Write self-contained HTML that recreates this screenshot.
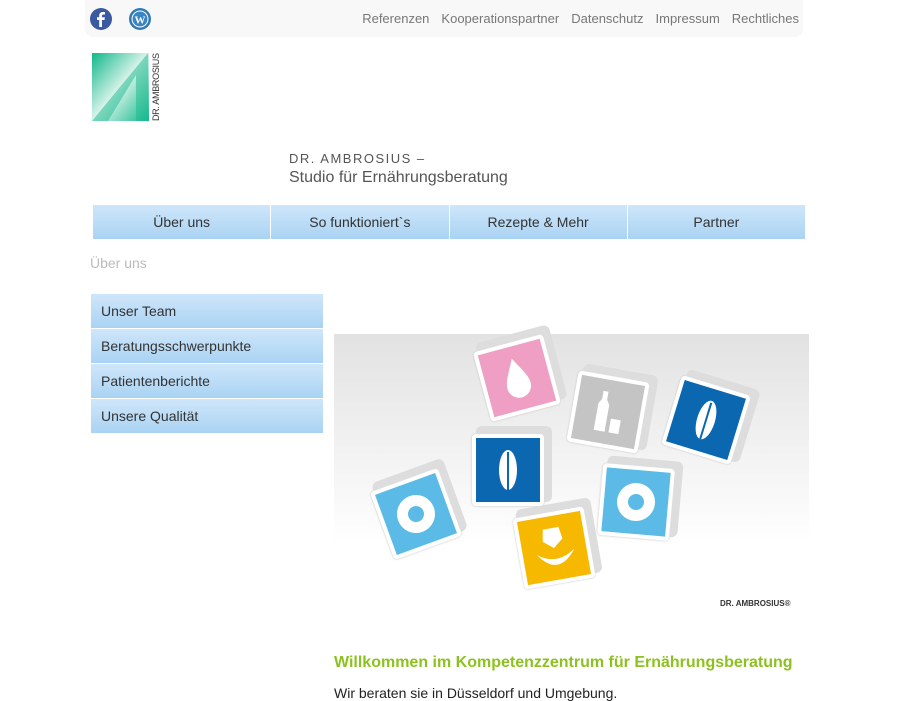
<!DOCTYPE html>
<html><head><meta charset="utf-8"><style>
body{margin:0;background:#fff;font-family:"Liberation Sans",sans-serif;width:900px;height:700px;overflow:hidden;position:relative}
.a{position:absolute}
.top{left:85px;top:0;width:718px;height:37px;background:#f8f8f8;border-radius:0 0 8px 8px}
.tl{right:101px;top:11px;font-size:13px;color:#777}
.tl span{margin-left:12px}
.menu{left:93px;top:205px;width:712px;height:34px;display:flex}
.menu div{flex:1;text-align:center;line-height:34px;font-size:14px;color:#333;background:linear-gradient(#cfe6fa,#a9d3f3);border-right:1px solid #fff}
.menu div:last-child{border-right:0}
.side{left:91px;top:294px;width:232px}
.side div{height:34px;line-height:34px;padding-left:10px;font-size:14px;color:#333;background:linear-gradient(#cfe6fa,#a9d3f3);margin-bottom:1px}
.c{position:absolute;width:64px;height:64px;border:4px solid #fff;border-radius:4px;box-shadow:6px -6px 0 2px #ddd,0 0 2px #bbb}
.c svg{position:absolute;left:0;top:0}
</style></head><body>
<div class="a top"></div>
<svg class="a" style="left:90px;top:8px" width="22" height="22"><circle cx="11" cy="11" r="11" fill="#3b5aa0"/><path d="M12 19v-7h2.5l.4-2.7H12V7.8c0-.8.3-1.3 1.4-1.3H15V4.1c-.3 0-1.2-.1-2.2-.1-2.2 0-3.6 1.3-3.6 3.7v1.6H7V12h2.2v7z" fill="#fff"/></svg>
<svg class="a" style="left:129px;top:8px" width="22" height="22"><circle cx="11" cy="11" r="11" fill="#2f79b5"/><circle cx="11" cy="11" r="8.5" fill="#fff"/><circle cx="11" cy="11" r="7.5" fill="#3a86c2"/><text x="11" y="15.5" font-size="11" font-weight="bold" text-anchor="middle" fill="#fff" font-family="Liberation Serif">W</text></svg>
<div class="a tl"><span>Referenzen</span><span>Kooperationspartner</span><span>Datenschutz</span><span>Impressum</span><span>Rechtliches</span></div>
<svg class="a" style="left:91px;top:53px" width="70" height="68"><defs><linearGradient id="g" x1="0" y1="0" x2="1" y2="1"><stop offset="0" stop-color="#10b88a"/><stop offset=".5" stop-color="#d8f3ea"/><stop offset="1" stop-color="#10b88a"/></linearGradient></defs><rect x="1" y="0" width="57" height="68" fill="url(#g)"/><path d="M1 68 L57 0 L57 68 L45 68 L45 22 L17 68Z" fill="#1bb98e" opacity=".5"/><text transform="translate(68,68) rotate(-90)" font-size="9" fill="#333" font-family="Liberation Sans" textLength="68">DR. AMBROSIUS</text></svg>
<div class="a" style="left:289px;top:151px;color:#555;font-size:13px;letter-spacing:1.5px">DR. AMBROSIUS –</div>
<div class="a" style="left:289px;top:169px;color:#555;font-size:16px">Studio für Ernährungsberatung</div>
<div class="a menu"><div>Über uns</div><div>So funktioniert`s</div><div>Rezepte &amp; Mehr</div><div>Partner</div></div>
<div class="a" style="left:90px;top:255px;color:#bbb;font-size:14px">Über uns</div>
<div class="a side"><div>Unser Team</div><div>Beratungsschwerpunkte</div><div>Patientenberichte</div><div>Unsere Qualität</div></div>
<div class="a" style="left:334px;top:334px;width:475px;height:280px;background:linear-gradient(#e2e2e2,#fff 75%)"></div>
<div class="c" style="left:481px;top:342px;background:#ee9fc3;transform:rotate(-15deg)"><svg width="64" height="64"><path d="M32 12 C26 24 20 32 20 40 a12 12 0 0 0 24 0 C44 32 38 24 32 12Z" fill="#fff"/></svg></div>
<div class="c" style="left:572px;top:376px;background:#c4c4c4;transform:rotate(10deg)"><svg width="64" height="64"><path d="M24 12h5v8l3 5v27h-11v-27l3-5z M36 38h10v14h-10z" fill="#fff"/></svg></div>
<div class="c" style="left:670px;top:384px;background:#0a67b0;transform:rotate(17deg)"><svg width="64" height="64"><ellipse cx="32" cy="32" rx="9" ry="20" fill="#fff"/><path d="M32 14v38" stroke="#0a67b0" stroke-width="2"/></svg></div>
<div class="c" style="left:472px;top:434px;background:#0a67b0"><svg width="64" height="64"><ellipse cx="32" cy="32" rx="9" ry="20" fill="#fff"/><path d="M32 14v38" stroke="#0a67b0" stroke-width="2"/></svg></div>
<div class="c" style="left:380px;top:478px;background:#5bbbe6;transform:rotate(-20deg)"><svg width="64" height="64"><circle cx="32" cy="32" r="19" fill="#fff"/><circle cx="32" cy="32" r="8" fill="#5bbbe6"/></svg></div>
<div class="c" style="left:600px;top:466px;background:#5bbbe6;transform:rotate(5deg)"><svg width="64" height="64"><circle cx="32" cy="32" r="19" fill="#fff"/><circle cx="32" cy="32" r="8" fill="#5bbbe6"/></svg></div>
<div class="c" style="left:518px;top:512px;background:#f7b800;transform:rotate(-10deg)"><svg width="64" height="64"><path d="M24 12h16l2 12-10 8-10-8z" fill="#fff"/><path d="M14 36 Q32 62 52 36 Q32 50 14 36Z" fill="#fff"/></svg></div>
<div class="a" style="left:720px;top:599px;font-size:8px;color:#333;font-weight:bold">DR. AMBROSIUS®</div>
<div class="a" style="left:334px;top:654px;color:#8cc21f;font-size:16px;font-weight:bold">Willkommen im Kompetenzzentrum für Ernährungsberatung</div>
<div class="a" style="left:334px;top:685px;color:#222;font-size:14px">Wir beraten sie in Düsseldorf und Umgebung.</div>
</body></html>
